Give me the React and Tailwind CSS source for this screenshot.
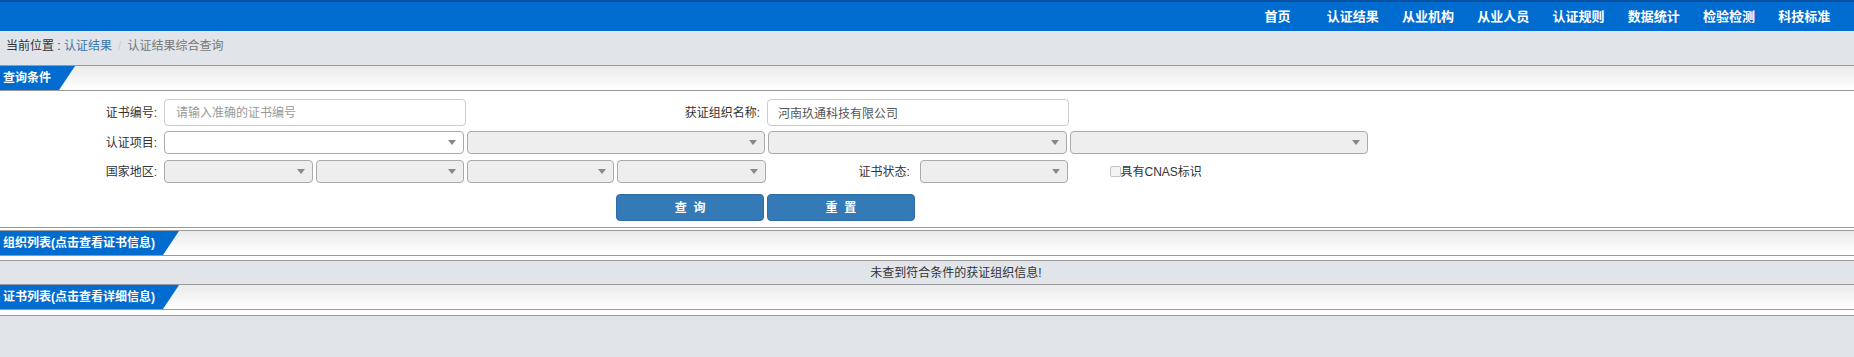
const navItems = ["首页", "认证结果", "从业机构", "从业人员", "认证规则", "数据统计", "检验检测", "科技标准"];

function SectionHeader({ title, first }) {
  return (
    <div
      className={
        first
          ? "h-[26px] border-y border-[#999] bg-linear-to-b from-[#ebebeb] to-white flex"
          : "h-[25px] border-b border-[#999] bg-linear-to-b from-[#ebebeb] to-white flex"
      }
    >
      <div className="bg-[#006ccf] text-white font-bold pl-[3px] pr-[24px] flex items-center [clip-path:polygon(0_0,100%_0,calc(100%_-_16px)_100%,0_100%)]">
        {title}
      </div>
    </div>
  );
}

function Select({ white }) {
  return (
    <div
      className={
        white
          ? "h-full rounded-[4px] border border-[#aaa] bg-white flex items-center justify-end pr-[7px]"
          : "h-full rounded-[4px] border border-[#aaa] bg-[#eeeeee] flex items-center justify-end pr-[7px]"
      }
    >
      <span className="border-x-[4px] border-t-[5px] border-x-transparent border-t-[#888]" />
    </div>
  );
}

export default function App() {
  return (
    <div className="min-h-screen bg-[#e1e5e9] text-[12px] text-[#333] [font-family:'Liberation_Sans','Noto_Sans_CJK_SC',sans-serif]">
      {/* 顶部导航 */}
      <nav className="h-[31px] border-t-2 border-[#0a51a2] bg-[#006ccf] flex justify-end pr-[12px]">
        {navItems.map((n) => (
          <a key={n} className="w-[75.25px] flex items-center justify-center text-[13px] font-bold text-white">
            {n}
          </a>
        ))}
      </nav>

      {/* 面包屑 */}
      <div className="h-[34px] pl-[6px] pt-[5px] leading-[20px]">
        <span>当前位置 : </span>
        <a className="text-[#3d73ad]">认证结果</a>
        <span className="px-[6px] text-[#ccc]">/</span>
        <span className="text-[#777]">认证结果综合查询</span>
      </div>

      {/* 查询条件 */}
      <SectionHeader title="查询条件" first />
      <div className="bg-white border-b border-[#999] pt-[8px] pb-[6px]">
        <div className="grid grid-cols-[164px_repeat(8,150.75px)] h-[27px]">
          <div className="flex items-center justify-end pr-[7px]">证书编号:</div>
          <div className="col-span-2">
            <input
              placeholder="请输入准确的证书编号"
              className="w-full h-full rounded-[4px] border border-[#ccc] px-[11px] outline-none placeholder:text-[#999]"
            />
          </div>
          <div className="col-span-2 flex items-center justify-end pr-[7px]">获证组织名称:</div>
          <div className="col-span-2">
            <input
              defaultValue="河南玖通科技有限公司"
              className="w-full h-full rounded-[4px] border border-[#ccc] px-[10px] text-[#555] outline-none"
            />
          </div>
        </div>

        <div className="grid grid-cols-[164px_repeat(8,150.75px)] h-[23px] mt-[5px]">
          <div className="flex items-center justify-end pr-[7px]">认证项目:</div>
          <div className="col-span-2 pr-[2px]"><Select white /></div>
          <div className="col-span-2 pl-[1px] pr-[2px]"><Select /></div>
          <div className="col-span-2 pl-[1px] pr-[2px]"><Select /></div>
          <div className="col-span-2 pl-[1px] pr-[2px]"><Select /></div>
        </div>

        <div className="grid grid-cols-[164px_repeat(8,150.75px)] h-[23px] mt-[6px]">
          <div className="flex items-center justify-end pr-[7px]">国家地区:</div>
          <div className="pr-[2px]"><Select /></div>
          <div className="pl-[1px] pr-[2px]"><Select /></div>
          <div className="pl-[1px] pr-[2px]"><Select /></div>
          <div className="pl-[1px] pr-[1px]"><Select /></div>
          <div className="flex items-center justify-end pr-[8px]">证书状态:</div>
          <div className="pl-[2px] pr-[1px]"><Select /></div>
          <div className="flex items-center pl-[41px]">
            <span className="w-[11px] h-[11px] rounded-[2px] border border-[#c4c4c4] bg-[#f4f4f4]" />
            <span>具有CNAS标识</span>
          </div>
        </div>

        <div className="grid grid-cols-[164px_repeat(8,150.75px)] h-[27px] mt-[11px]">
          <button className="col-start-5 mr-[3px] rounded-[4px] border border-[#2e6da4] bg-[#337ab7] text-white font-bold">
            查&nbsp;&nbsp;询
          </button>
          <button className="mr-[3px] rounded-[4px] border border-[#2e6da4] bg-[#337ab7] text-white font-bold">
            重&nbsp;&nbsp;置
          </button>
        </div>
      </div>

      {/* 组织列表 */}
      <div className="h-[2px] bg-white" />
      <SectionHeader title="组织列表(点击查看证书信息)" first />
      <div className="h-[4px] bg-white" />
      <div className="h-[25px] border-y border-[#999] flex items-center justify-center pl-[58px]">
        未查到符合条件的获证组织信息!
      </div>

      {/* 证书列表 */}
      <SectionHeader title="证书列表(点击查看详细信息)" />
      <div className="h-[5px] bg-white" />
      <div className="border-t border-[#999]" />
    </div>
  );
}
